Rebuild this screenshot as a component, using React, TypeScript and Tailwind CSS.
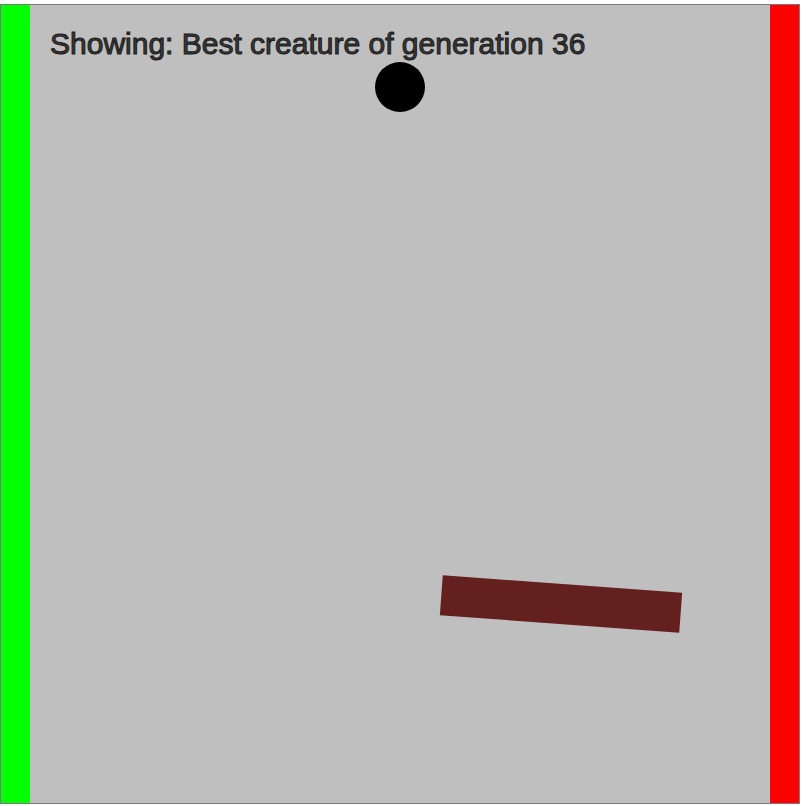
export default function App() {
  return (
    <div className="pt-1 bg-white w-[807px] h-[806px]">
      {/* Simulation canvas */}
      <div className="relative flex w-[800px] h-[800px] border border-[#7a7a7a] bg-[#bfbfbf]">
        <div className="w-[29px] h-full bg-[#00ff00]" />
        <div className="flex-1 h-full pl-[20px] pt-[24px]">
          <p
            className="text-[30px] leading-none text-[#383838] [-webkit-text-stroke:1px_#1a1a1a]"
            style={{ fontFamily: '"Liberation Sans", Arial, sans-serif' }}
          >
            Showing: Best creature of generation 36
          </p>
        </div>
        <div className="w-[29px] h-full bg-[#ff0000]" />

        {/* Creature parts */}
        <div className="absolute left-[374px] top-[57px] w-[50px] h-[50px] rounded-full bg-black" />
        <div className="absolute left-[440px] top-[579px] w-[240px] h-[40px] bg-[#641f1f] rotate-[4.2deg]" />
      </div>
    </div>
  );
}
